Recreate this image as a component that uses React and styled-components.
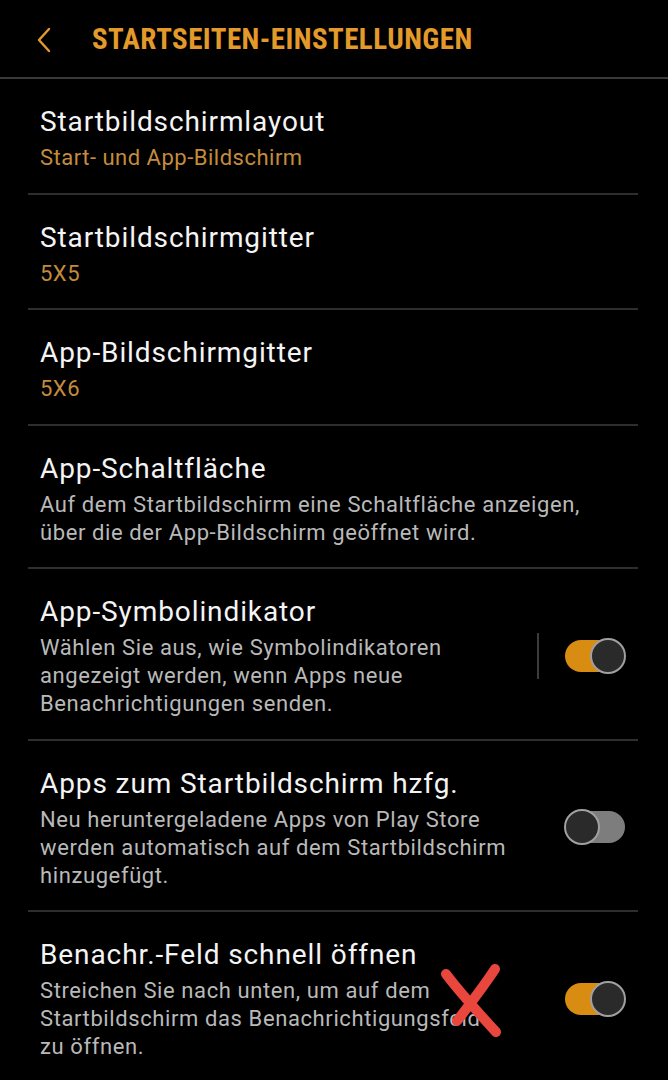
import React from 'react';
import styled, { createGlobalStyle } from 'styled-components';

const GlobalStyle = createGlobalStyle`
  html, body {
    margin: 0;
    padding: 0;
    background: #000;
    overflow: hidden;
  }
  * { box-sizing: border-box; }
`;

const items = [
  { title: 'Startbildschirmlayout', value: 'Start- und App-Bildschirm' },
  { title: 'Startbildschirmgitter', value: '5X5' },
  { title: 'App-Bildschirmgitter', value: '5X6' },
  {
    title: 'App-Schaltfläche',
    desc: 'Auf dem Startbildschirm eine Schaltfläche anzeigen,\nüber die der App-Bildschirm geöffnet wird.',
  },
  {
    title: 'App-Symbolindikator',
    desc: 'Wählen Sie aus, wie Symbolindikatoren\nangezeigt werden, wenn Apps neue\nBenachrichtigungen senden.',
    toggle: true,
    on: true,
    split: true,
  },
  {
    title: 'Apps zum Startbildschirm hzfg.',
    desc: 'Neu heruntergeladene Apps von Play Store\nwerden automatisch auf dem Startbildschirm\nhinzugefügt.',
    toggle: true,
    on: false,
  },
  {
    title: 'Benachr.-Feld schnell öffnen',
    desc: 'Streichen Sie nach unten, um auf dem\nStartbildschirm das Benachrichtigungsfeld\nzu öffnen.',
    toggle: true,
    on: true,
    marked: true,
  },
];

export default function App() {
  return (
    <>
      <GlobalStyle />
      <Screen>
        <TopBar>
          <BackButton>
            <svg width="16" height="26" viewBox="0 0 16 26">
              <polyline points="13,2 3,13 13,24" fill="none" stroke="#e39a2a" strokeWidth="2.4" strokeLinecap="round" strokeLinejoin="round" />
            </svg>
          </BackButton>
          <Heading>STARTSEITEN-EINSTELLUNGEN</Heading>
        </TopBar>
        <List>
          {items.map((item) => (
            <Row key={item.title}>
              <Texts>
                <Title>{item.title}</Title>
                {item.value && <Value>{item.value}</Value>}
                {item.desc && <Desc>{item.desc}</Desc>}
              </Texts>
              {item.toggle && (
                <Trailing>
                  {item.split && <Split />}
                  <Switch $on={item.on}>
                    <Knob $on={item.on} />
                  </Switch>
                </Trailing>
              )}
              {item.marked && (
                <Mark viewBox="0 0 64 74" width="64" height="74">
                  <path d="M6 10 C 18 26, 34 44, 56 68" fill="none" stroke="#e9463d" strokeWidth="10" strokeLinecap="round" />
                  <path d="M55 5 C 44 22, 30 40, 17 57" fill="none" stroke="#e9463d" strokeWidth="10" strokeLinecap="round" />
                </Mark>
              )}
            </Row>
          ))}
        </List>
      </Screen>
    </>
  );
}

const Screen = styled.div`
  width: 668px;
  height: 1080px;
  background: #000;
  font-family: Roboto, 'Liberation Sans', sans-serif;
`;

const TopBar = styled.header`
  height: 79px;
  display: flex;
  align-items: center;
  padding-left: 36px;
  border-bottom: 2px solid #3a3a3a;
`;

const BackButton = styled.span`
  display: flex;
  width: 56px;
  margin-top: 2px;
`;

const Heading = styled.h1`
  margin: 0;
  font-family: 'Roboto Condensed', Roboto, sans-serif;
  font-stretch: condensed;
  font-weight: 700;
  font-size: 29px;
  color: #e39a2a;
  letter-spacing: 0.45px;
`;

const List = styled.div`
  margin: 0 30px 0 28px;
`;

const Row = styled.div`
  position: relative;
  display: flex;
  align-items: center;
  padding: 24px 13px 20.5px 12px;
  border-bottom: 2px solid #2e2e2e;

  &:last-child {
    border-bottom: none;
  }
`;

const Texts = styled.div`
  flex: 1;
  display: flex;
  flex-direction: column;
  gap: 3px;
`;

const Title = styled.div`
  font-size: 28px;
  line-height: 38px;
  letter-spacing: 0.9px;
  color: #f4f4f4;
`;

const Value = styled.div`
  font-size: 22px;
  line-height: 28px;
  letter-spacing: 0.5px;
  color: #c58b3c;
`;

const Desc = styled.div`
  font-size: 22px;
  line-height: 28px;
  letter-spacing: 0.6px;
  color: #b9b9b9;
  white-space: pre-line;
`;

const Trailing = styled.div`
  display: flex;
  align-items: center;
  gap: 26px;
`;

const Split = styled.span`
  width: 2px;
  height: 46px;
  background: #3c3c3c;
`;

const Switch = styled.span`
  position: relative;
  width: 60px;
  height: 32px;
  border-radius: 16px;
  background: ${(p) => (p.$on ? '#d98c12' : '#7d7d7d')};
`;

const Knob = styled.span`
  position: absolute;
  top: -2px;
  ${(p) => (p.$on ? 'right: -1px;' : 'left: -1px;')}
  width: 36px;
  height: 36px;
  border-radius: 50%;
  background: #2a2a2a;
  border: 2px solid #a0a0a0;
`;

const Mark = styled.svg`
  position: absolute;
  left: 412px;
  top: 52px;
`;
